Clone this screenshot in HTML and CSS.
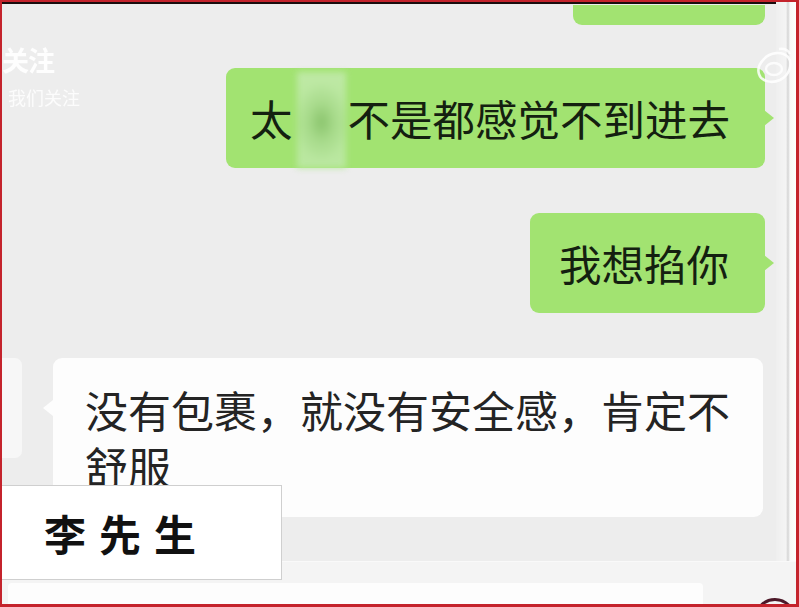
FILE: index.html
```html
<!DOCTYPE html>
<html lang="zh-CN">
<head>
<meta charset="utf-8">
<title>聊天截图</title>
<link rel="stylesheet" href="styles.css">
</head>
<body>
<div class="screen">
  <div class="upper">
    <div class="chat">
      <div class="row out first">
        <div class="bubble green stub"></div>
      </div>
      <div class="row out gap">
        <div class="bubble green msg-long">
          <span>太</span><span class="blurred"></span><span class="rest">不是都感觉不到进去</span>
        </div>
      </div>
      <div class="row out gap">
        <div class="bubble green msg-short">我想掐你</div>
      </div>
      <div class="row in gap">
        <div class="avatar"></div>
        <div class="bubble white">没有包裹，就没有安全感，肯定不舒服</div>
      </div>
    </div>
    <div class="edge"></div>
  </div>
  <div class="inputbar">
    <div class="input"></div>
    <div class="round-btn"></div>
  </div>

  <div class="watermark">
    <div class="wm-big">关注</div>
    <div class="wm-small">我们关注</div>
  </div>
  <svg class="weibo" width="38" height="42" viewBox="0 0 38 42">
    <path d="M9 14 C15 7 27 6 33 12 C38 18 35 30 25 35 C16 39 6 36 4 29 C2 23 5 18 9 14 Z" fill="none" stroke="#ffffff" stroke-width="2.6" opacity="0.85"/>
    <ellipse cx="19" cy="24" rx="8" ry="6" fill="none" stroke="#ffffff" stroke-width="2.4" opacity="0.8"/>
    <path d="M24 4 C29 3 33 5 35 9" fill="none" stroke="#ffffff" stroke-width="2.4" opacity="0.8"/>
  </svg>

  <div class="caption">李先生</div>
</div>
</body>
</html>
```

FILE: styles.css
```css
* { box-sizing: border-box; }

html, body {
  margin: 0;
  padding: 0;
  background: #ededed;
}

.screen {
  position: relative;
  width: 799px;
  height: 607px;
  overflow: hidden;
  display: flex;
  flex-direction: column;
  background: #ededed;
  border-style: solid;
  border-color: #c4232c;
  border-width: 2px 3px 3px 2px;
  box-shadow: inset 0 2px 0 #1a0d0d;
  font-family: "Noto Sans CJK SC", "Noto Sans", sans-serif;
}

.upper {
  flex: 1;
  display: flex;
  min-height: 0;
}

.chat {
  flex: 1;
  display: flex;
  flex-direction: column;
  padding-top: 3px;
  min-width: 0;
}

.row {
  display: flex;
  align-items: flex-start;
}

.row.out {
  justify-content: flex-end;
  padding-right: 11px;
}

.row.gap { margin-top: 45px; }
.row.gap:nth-child(2) { margin-top: 43px; }

.bubble {
  position: relative;
  border-radius: 9px;
}

.green {
  background: #a2e371;
  color: #142010;
  font-size: 42.5px;
}

.stub {
  width: 192px;
  height: 20px;
  border-radius: 0 0 9px 9px;
}

.green.msg-long,
.green.msg-short {
  height: 100px;
  display: flex;
  align-items: center;
  line-height: 1;
}

.green.msg-long::after,
.green.msg-short::after {
  content: "";
  position: absolute;
  right: -9px;
  top: 42px;
  border-left: 10px solid #a2e371;
  border-top: 8px solid transparent;
  border-bottom: 8px solid transparent;
  z-index: 2;
}

.msg-long {
  padding: 0 35px 0 24px;
}

.blurred {
  align-self: stretch;
  width: 49px;
  margin: 4px 1px 0 5px;
  background:
    radial-gradient(ellipse 26px 40px at 50% 52%, rgba(125, 185, 95, 0.75) 0%, rgba(150, 205, 120, 0.45) 50%, rgba(180, 230, 150, 0) 100%),
    linear-gradient(to bottom, #bfe9a6 0%, #b4e598 55%, #bbe8a2 100%);
  filter: blur(3px);
}

.msg-short {
  padding: 0 36px 0 29px;
}

.avatar {
  width: 20px;
  height: 100px;
  background: #f7f7f7;
  border-radius: 0 7px 7px 0;
}

.white {
  margin-left: 31px;
  width: 710px;
  background: #fdfdfd;
  color: #242424;
  font-size: 43px;
  line-height: 56px;
  padding: 23px 28px 24px 32px;
}

.white::before {
  content: "";
  position: absolute;
  left: -10px;
  top: 42px;
  border-right: 10px solid #fdfdfd;
  border-top: 8px solid transparent;
  border-bottom: 8px solid transparent;
}

.edge {
  width: 20px;
  flex: none;
  background: linear-gradient(to right, #efefef 0%, #f4f4f4 50%, #dadada 58%, #dcdcdc 62%, #f8f8f8 70%, #fefefe 100%);
}

.inputbar {
  flex: none;
  height: 43px;
  background: #f4f4f4;
  border-top: 1px solid #f9f9f9;
  display: flex;
  align-items: flex-start;
  overflow: hidden;
}

.input {
  flex: none;
  margin-top: 21px;
  margin-left: 6px;
  width: 695px;
  height: 30px;
  background: #fdfdfd;
  border-radius: 4px;
}

.round-btn {
  flex: none;
  margin-top: 36px;
  margin-left: 51px;
  width: 42px;
  height: 42px;
  border: 3px solid #4c1828;
  border-radius: 50%;
}

.watermark {
  position: absolute;
  left: 0;
  top: 40px;
  color: #ffffff;
}

.wm-big {
  font-size: 27px;
  font-weight: 700;
  line-height: 36px;
  opacity: 0.95;
  letter-spacing: -1px;
}

.wm-small {
  margin-top: 8px;
  margin-left: 6px;
  font-size: 18px;
  line-height: 22px;
  opacity: 0.85;
}

.weibo {
  position: absolute;
  left: 753px;
  top: 43px;
}

.caption {
  position: absolute;
  left: -2px;
  top: 483px;
  width: 282px;
  height: 95px;
  background: #ffffff;
  border: 1px solid #cfcfcf;
  display: flex;
  align-items: center;
  padding-left: 43px;
  font-size: 42px;
  font-weight: 700;
  letter-spacing: 13px;
  color: #111111;
}
```
